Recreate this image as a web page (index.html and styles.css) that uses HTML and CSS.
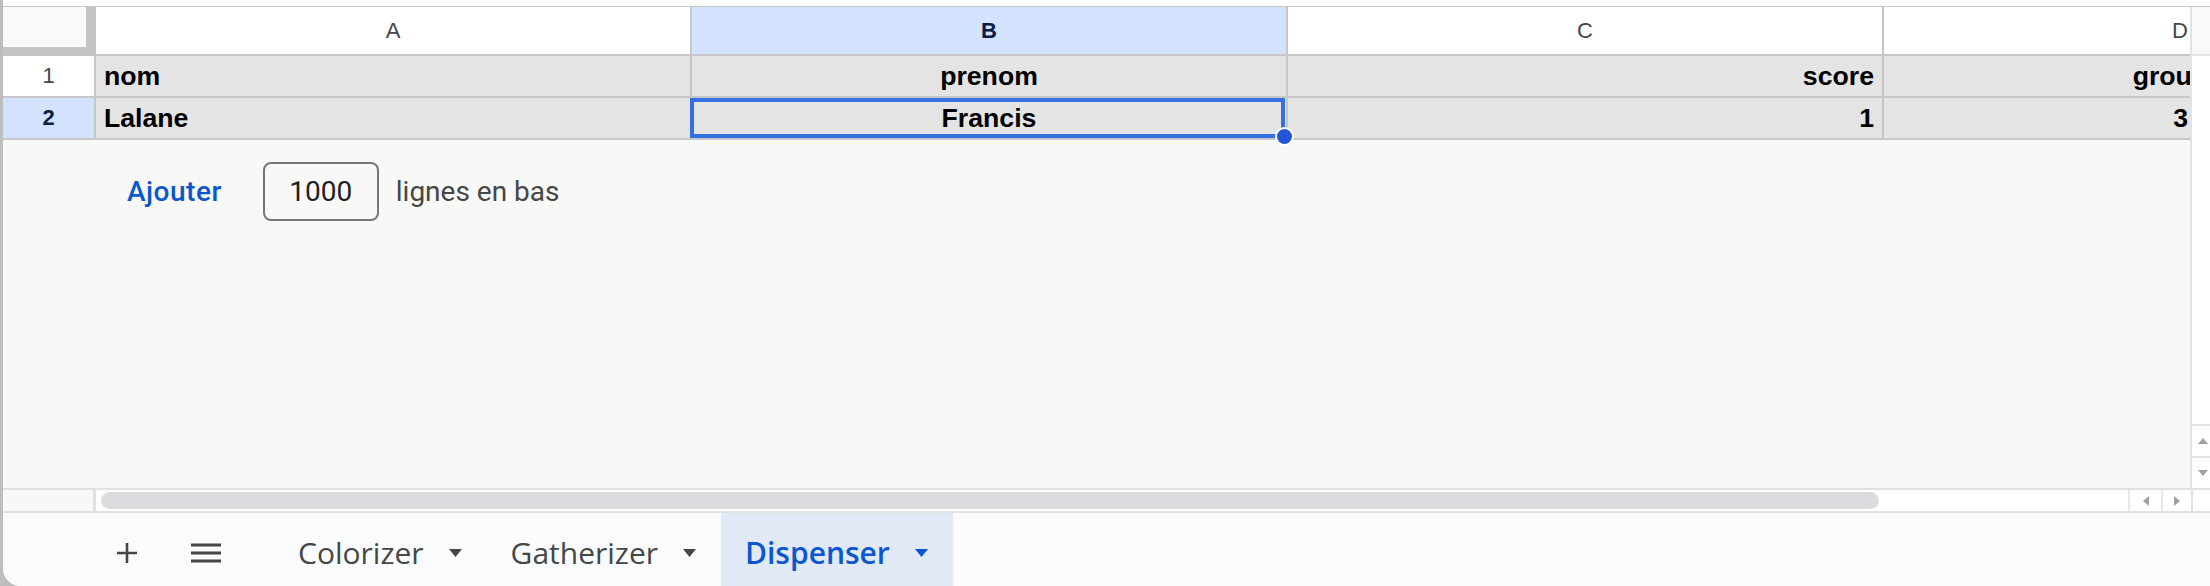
FILE: index.html
```html
<!DOCTYPE html>
<html lang="fr">
<head>
<meta charset="utf-8">
<title>Dispenser</title>
<link rel="stylesheet" href="styles.css">
</head>
<body>
<div class="window">
  <div class="topband"></div>
  <div class="main">
    <div class="pane">
      <div class="grid">
        <div class="corner"></div>
        <div class="colhead">A</div>
        <div class="colhead colhead--sel">B</div>
        <div class="colhead">C</div>
        <div class="colhead colhead--end">D</div>

        <div class="rowhead">1</div>
        <div class="cell">nom</div>
        <div class="cell cell--center">prenom</div>
        <div class="cell cell--right">score</div>
        <div class="cell cell--right cell--end"><span class="overflow">groupe</span></div>

        <div class="rowhead rowhead--sel">2</div>
        <div class="cell">Lalane</div>
        <div class="cell cell--center cell--active">Francis<span class="handle"></span></div>
        <div class="cell cell--right">1</div>
        <div class="cell cell--right cell--end">3</div>
      </div>
      <div class="addrows">
        <span class="addrows__btn">Ajouter</span>
        <span class="addrows__input">1000</span>
        <span class="addrows__label">lignes en bas</span>
      </div>
    </div>
    <div class="vscroll">
      <div class="vscroll__head"></div>
      <div class="vscroll__track"></div>
      <div class="vscroll__btn"><svg width="10" height="6" viewBox="0 0 10 6"><polygon points="0,6 10,6 5,0" fill="#9aa0a6"/></svg></div>
      <div class="vscroll__btn"><svg width="10" height="6" viewBox="0 0 10 6"><polygon points="0,0 10,0 5,6" fill="#9aa0a6"/></svg></div>
    </div>
  </div>
  <div class="hscroll">
    <div class="hscroll__lead"></div>
    <div class="hscroll__track"><div class="hscroll__thumb"></div></div>
    <div class="hscroll__btn hscroll__btn--left"><svg width="6" height="10" viewBox="0 0 6 10"><polygon points="6,0 6,10 0,5" fill="#9aa0a6"/></svg></div>
    <div class="hscroll__btn hscroll__btn--right"><svg width="6" height="10" viewBox="0 0 6 10"><polygon points="0,0 0,10 6,5" fill="#9aa0a6"/></svg></div>
    <div class="hscroll__corner"></div>
  </div>
  <div class="tabbar">
    <div class="tabbar__icon"><svg width="22" height="22" viewBox="0 0 22 22"><path d="M11 1v20M1 11h20" stroke="#444746" stroke-width="2.6" fill="none"/></svg></div>
    <div class="tabbar__icon tabbar__icon--menu"><svg width="30" height="20" viewBox="0 0 30 20"><path d="M0 2h30M0 10h30M0 18h30" stroke="#444746" stroke-width="3" fill="none"/></svg></div>
    <div class="tabs">
      <div class="tab"><span>Colorizer</span><svg class="caret" width="13" height="8" viewBox="0 0 13 8"><polygon points="0,0 13,0 6.5,8" fill="#444746"/></svg></div>
      <div class="tab"><span>Gatherizer</span><svg class="caret" width="13" height="8" viewBox="0 0 13 8"><polygon points="0,0 13,0 6.5,8" fill="#444746"/></svg></div>
      <div class="tab tab--active"><span>Dispenser</span><svg class="caret" width="13" height="8" viewBox="0 0 13 8"><polygon points="0,0 13,0 6.5,8" fill="#0b57d0"/></svg></div>
    </div>
  </div>
</div>
</body>
</html>
```

FILE: styles.css
```css
* { box-sizing: border-box; }
html, body { margin: 0; padding: 0; }
body {
  width: 2210px;
  height: 586px;
  overflow: hidden;
  background: #bdbdbd;
  font-family: "Liberation Sans", Arial, sans-serif;
}
.window {
  margin-left: 3px;
  height: 586px;
  background: #fff;
  border-bottom-left-radius: 18px;
  overflow: hidden;
  display: flex;
  flex-direction: column;
}
.topband {
  height: 7px;
  flex: none;
  background: #fff;
  border-bottom: 1px solid #c7c7c7;
}
.main {
  height: 481px;
  flex: none;
  display: flex;
}
.pane {
  flex: 1;
  min-width: 0;
  background: #f8f8f7;
  display: flex;
  flex-direction: column;
}
.grid {
  display: grid;
  grid-template-columns: 93px 596px 596px 596px 1fr;
  grid-template-rows: 49px 42px 42px;
}
.corner {
  background: #f8f9fa;
  border-right: 10px solid #c4c4c4;
  border-bottom: 9px solid #c4c4c4;
}
.colhead,
.rowhead {
  background: #fff;
  border-right: 2px solid #c7c7c7;
  border-bottom: 2px solid #c7c7c7;
  display: flex;
  align-items: center;
  justify-content: center;
  font-size: 22px;
  color: #444746;
}
.colhead--sel,
.rowhead--sel {
  background: #d3e3fd;
  color: #0b1c49;
  font-weight: bold;
}
.colhead--end {
  justify-content: flex-end;
  border-right: 0;
  padding-right: 2px;
}
.cell {
  position: relative;
  background: #e4e4e4;
  border-right: 2px solid #c7c7c7;
  border-bottom: 2px solid #c7c7c7;
  display: flex;
  align-items: center;
  padding: 0 8px;
  font-weight: bold;
  font-size: 26.67px;
  color: #000;
  white-space: nowrap;
  overflow: hidden;
}
.cell--center { justify-content: center; }
.cell--right { justify-content: flex-end; }
.cell--end {
  border-right: 0;
  padding-right: 2px;
}
.overflow { margin-right: -35px; }
.cell--active {
  overflow: visible;
  z-index: 1;
}
.cell--active::after {
  content: "";
  position: absolute;
  left: -2px;
  top: 0;
  right: 1px;
  bottom: 0;
  border: 4px solid #3370e0;
}
.handle {
  position: absolute;
  right: -8px;
  bottom: -8px;
  width: 19px;
  height: 19px;
  border-radius: 50%;
  background: #2256d6;
  border: 2px solid #fff;
  z-index: 2;
}
.addrows {
  display: flex;
  align-items: center;
  padding: 22px 0 0 124px;
  font-family: Roboto, "Liberation Sans", sans-serif;
  font-size: 28px;
}
.addrows__btn {
  color: #0b57d0;
  font-weight: 500;
  letter-spacing: 0.5px;
  margin-right: 41px;
}
.addrows__input {
  width: 116px;
  height: 59px;
  border: 2px solid #747775;
  border-radius: 8px;
  display: flex;
  align-items: center;
  justify-content: center;
  color: #1f1f1f;
  margin-right: 17px;
}
.addrows__label { color: #444746; }

.vscroll {
  width: 20px;
  flex: none;
  display: flex;
  flex-direction: column;
  background: #fff;
  border-left: 2px solid #e3e3e3;
}
.vscroll__head {
  height: 49px;
  background: #f8f9fa;
  border-bottom: 2px solid #e3e3e3;
}
.vscroll__track { flex: 1; }
.vscroll__btn {
  height: 32px;
  border-top: 2px solid #e3e3e3;
  display: flex;
  align-items: center;
  justify-content: center;
  padding-left: 4px;
}
.hscroll {
  height: 25px;
  flex: none;
  display: flex;
  background: #fff;
  border-top: 2px solid #e1e1e1;
  border-bottom: 2px solid #e1e1e1;
}
.hscroll__lead {
  width: 93px;
  background: #f8f8f7;
  border-right: 3px solid #e1e1e1;
}
.hscroll__track {
  flex: 1;
  display: flex;
  align-items: center;
  padding-left: 5px;
}
.hscroll__thumb {
  width: 1778px;
  height: 17px;
  border-radius: 9px;
  background: #dadce0;
}
.hscroll__btn {
  border-left: 2px solid #e8e8e8;
  display: flex;
  align-items: center;
  justify-content: center;
}
.hscroll__btn--left { width: 33px; }
.hscroll__btn--right { width: 30px; }
.hscroll__corner {
  width: 19px;
  border-left: 2px solid #e1e1e1;
}
.tabbar {
  flex: 1;
  display: flex;
  align-items: stretch;
  background: #f9fbfd;
  padding-left: 96px;
  font-family: "Open Sans", Roboto, sans-serif;
  font-size: 30px;
  font-weight: 500;
  color: #444746;
}
.tabbar__icon {
  width: 56px;
  display: flex;
  align-items: center;
  justify-content: center;
  padding-top: 6px;
}
.tabbar__icon--menu { margin-left: 23px; }
.tabs {
  display: flex;
  margin-left: 40px;
}
.tab {
  display: flex;
  align-items: center;
  gap: 25px;
  padding: 6px 25px 0 24px;
}
.tab--active {
  background: #e1e9f7;
  color: #0b57d0;
  font-weight: 600;
}
.caret { flex: none; }
```
